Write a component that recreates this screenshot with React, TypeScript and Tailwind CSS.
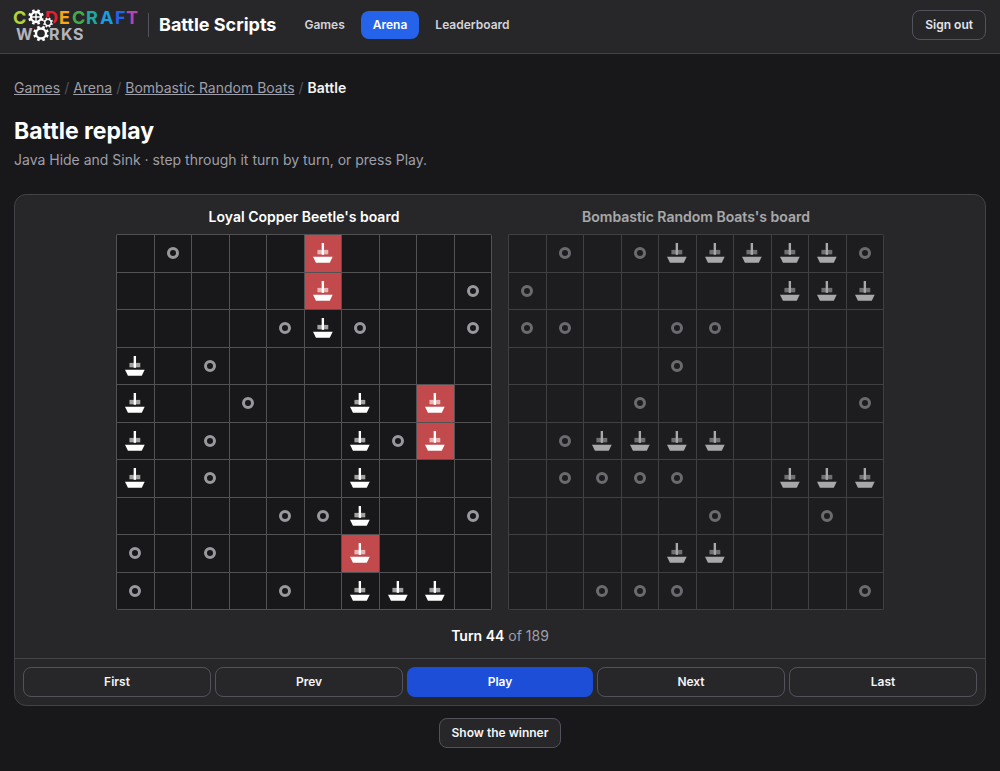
// o = miss, s = ship, x = ship that was hit
const LEFT_BOARD = [
    '.o...x....',
    '.....x...o',
    '....oso..o',
    's.o.......',
    's..o..s.x.',
    's.o...sox.',
    's.o...s...',
    '....oos..o',
    'o.o...x...',
    'o...o.sss.',
];

const RIGHT_BOARD = [
    '.o.ossssso',
    'o......sss',
    'oo..oo....',
    '....o.....',
    '...o.....o',
    '.ossss....',
    '.oooo..sss',
    '.....o..o.',
    '....ss....',
    '..ooo....o',
];

const NAV_LINKS = ['Games', 'Arena', 'Leaderboard'];
const CRUMBS = ['Games', 'Arena', 'Bombastic Random Boats'];
const CONTROLS = ['First', 'Prev', 'Play', 'Next', 'Last'];

const LOGO_TOP = [
    { char: 'C', x: -1, fill: '#b5d334' },
    { char: 'D', x: 31, fill: '#e5202e' },
    { char: 'E', x: 45, fill: '#f9a51a' },
    { char: 'C', x: 58, fill: '#3fae49' },
    { char: 'R', x: 72, fill: '#1fa7a0' },
    { char: 'A', x: 86, fill: '#1a9ee0' },
    { char: 'F', x: 101, fill: '#2563eb' },
    { char: 'T', x: 112, fill: '#b742b5' },
];

const LOGO_BOTTOM = [
    { char: 'W', x: 2 },
    { char: 'R', x: 35 },
    { char: 'K', x: 47 },
    { char: 'S', x: 59 },
];

interface GearProps {
    cx: number;
    cy: number;
    r: number;
    hub?: boolean;
}

const Gear = ({ cx, cy, r, hub }: GearProps) => (
    <g transform={`translate(${cx} ${cy})`} fill="none" stroke="#fff">
        <circle r={r * 0.64} strokeWidth={r * 0.3} />
        {Array.from({ length: 8 }, (_, i) => (
            <path
                key={i}
                d={`M0 ${-r * 0.7}V${-r}`}
                strokeWidth={r * 0.34}
                transform={`rotate(${45 * i + 22.5})`}
            />
        ))}
        {hub && <path d="M0 -4V4M-4 0H4" strokeWidth="1.4" />}
    </g>
);

const Logo = () => (
    <svg
        viewBox="0 0 124 34"
        className="h-[34px] w-[124px] overflow-visible"
        role="img"
        aria-label="Codecraft Works"
        fontWeight="700"
        fontSize="18"
    >
        {LOGO_TOP.map((l) => (
            <text key={l.x} x={l.x} y="16" fill={l.fill}>
                {l.char}
            </text>
        ))}
        {LOGO_BOTTOM.map((l) => (
            <text key={l.x} x={l.x} y="32" fill="#b4b4bc" fontSize="16">
                {l.char}
            </text>
        ))}
        <circle cx="34" cy="14.5" r="5.6" fill="#27272a" />
        <Gear cx={22} cy={9} r={7.8} hub />
        <Gear cx={34} cy={14.5} r={5} />
        <Gear cx={27} cy={25.5} r={7.8} />
    </svg>
);

const Ship = () => (
    <svg viewBox="0 0 20 20" className="w-[54%]" fill="currentColor">
        <rect x="4.5" y="7" width="11" height="4.5" opacity="0.6" />
        <rect x="8.8" y="0" width="2.4" height="12" />
        <path d="M0 14H20L17 20H3Z" />
    </svg>
);

const Cell = ({ kind }: { kind: string }) => (
    <div
        className={`flex aspect-square items-center justify-center border-r border-b border-[#525254] ${
            kind === 'x' ? 'bg-[#c24a4c]' : 'bg-zinc-900'
        }`}
    >
        {kind === 'o' && <span className="size-3 rounded-full border-3 border-[#99999d]" />}
        {(kind === 's' || kind === 'x') && <Ship />}
    </div>
);

interface BoardProps {
    title: string;
    rows: string[];
    dimmed?: boolean;
}

const Board = ({ title, rows, dimmed }: BoardProps) => (
    <section className={dimmed ? 'opacity-60' : ''}>
        <h2 className="mb-[7px] text-center text-sm leading-5 font-semibold">{title}</h2>
        <div className="grid grid-cols-10 overflow-hidden rounded-xs border-t border-l border-[#525254]">
            {rows.flatMap((row, y) =>
                row.split('').map((kind, x) => <Cell key={`${x}-${y}`} kind={kind} />),
            )}
        </div>
    </section>
);

const App = () => {
    return (
        <div className='min-h-screen bg-zinc-900 text-white font-["Inter",sans-serif]'>
            <header className="flex items-center border-b border-[#434347] bg-zinc-800 px-3.5 pt-2 pb-[11px]">
                <a href="#home" className="flex items-center">
                    <Logo />
                    <span className="ml-2.5 border-l border-zinc-600 pl-2.5 text-lg leading-6 font-bold">
                        Battle Scripts
                    </span>
                </a>
                <nav className="ml-4 flex items-center gap-1">
                    {NAV_LINKS.map((name) => (
                        <a
                            key={name}
                            href={`#${name.toLowerCase()}`}
                            className={`rounded-lg px-3 py-1 text-xs leading-5 font-semibold ${
                                name === 'Arena' ? 'bg-[#2563eb] text-white' : 'text-zinc-300'
                            }`}
                        >
                            {name}
                        </a>
                    ))}
                </nav>
                <button className="ml-auto rounded-lg border border-zinc-600 px-3 py-1 text-xs leading-5 font-semibold text-zinc-200">
                    Sign out
                </button>
            </header>

            <main className="px-3.5 pt-6 pb-6">
                <nav aria-label="Breadcrumb" className="flex gap-1 text-sm leading-5">
                    {CRUMBS.map((name) => (
                        <span key={name} className="flex gap-1">
                            <a href="#crumb" className="text-zinc-400 underline">
                                {name}
                            </a>
                            <span className="text-zinc-600">/</span>
                        </span>
                    ))}
                    <span className="font-semibold text-zinc-100">Battle</span>
                </nav>

                <h1 className="mt-4 text-[23px] leading-[34px] font-bold">Battle replay</h1>
                <p className="mt-0.5 text-sm leading-5 text-zinc-400">
                    Java Hide and Sink · step through it turn by turn, or press Play.
                </p>

                <div className="mt-6 rounded-xl border border-[#434347] bg-zinc-800">
                    <div className="mx-auto grid max-w-3xl grid-cols-2 gap-4 pt-3">
                        <Board title="Loyal Copper Beetle's board" rows={LEFT_BOARD} />
                        <Board title="Bombastic Random Boats's board" rows={RIGHT_BOARD} dimmed />
                    </div>
                    <p className="pt-4 pb-3 text-center text-sm leading-5 text-zinc-400">
                        <span className="font-semibold text-white">Turn 44</span> of 189
                    </p>
                    <div className="flex gap-1 border-t border-[#434347] p-2">
                        {CONTROLS.map((name) => (
                            <button
                                key={name}
                                className={`flex-1 rounded-lg px-3 py-1 text-xs leading-5 font-semibold ${
                                    name === 'Play'
                                        ? 'bg-[#1d4ed8] text-white'
                                        : 'border border-zinc-600 text-zinc-100'
                                }`}
                            >
                                {name}
                            </button>
                        ))}
                    </div>
                </div>

                <div className="mt-3 flex justify-center">
                    <button className="rounded-lg border border-zinc-600 bg-zinc-800 px-3 py-1 text-xs leading-5 font-semibold text-zinc-100">
                        Show the winner
                    </button>
                </div>
            </main>
        </div>
    );
};

export default App;
